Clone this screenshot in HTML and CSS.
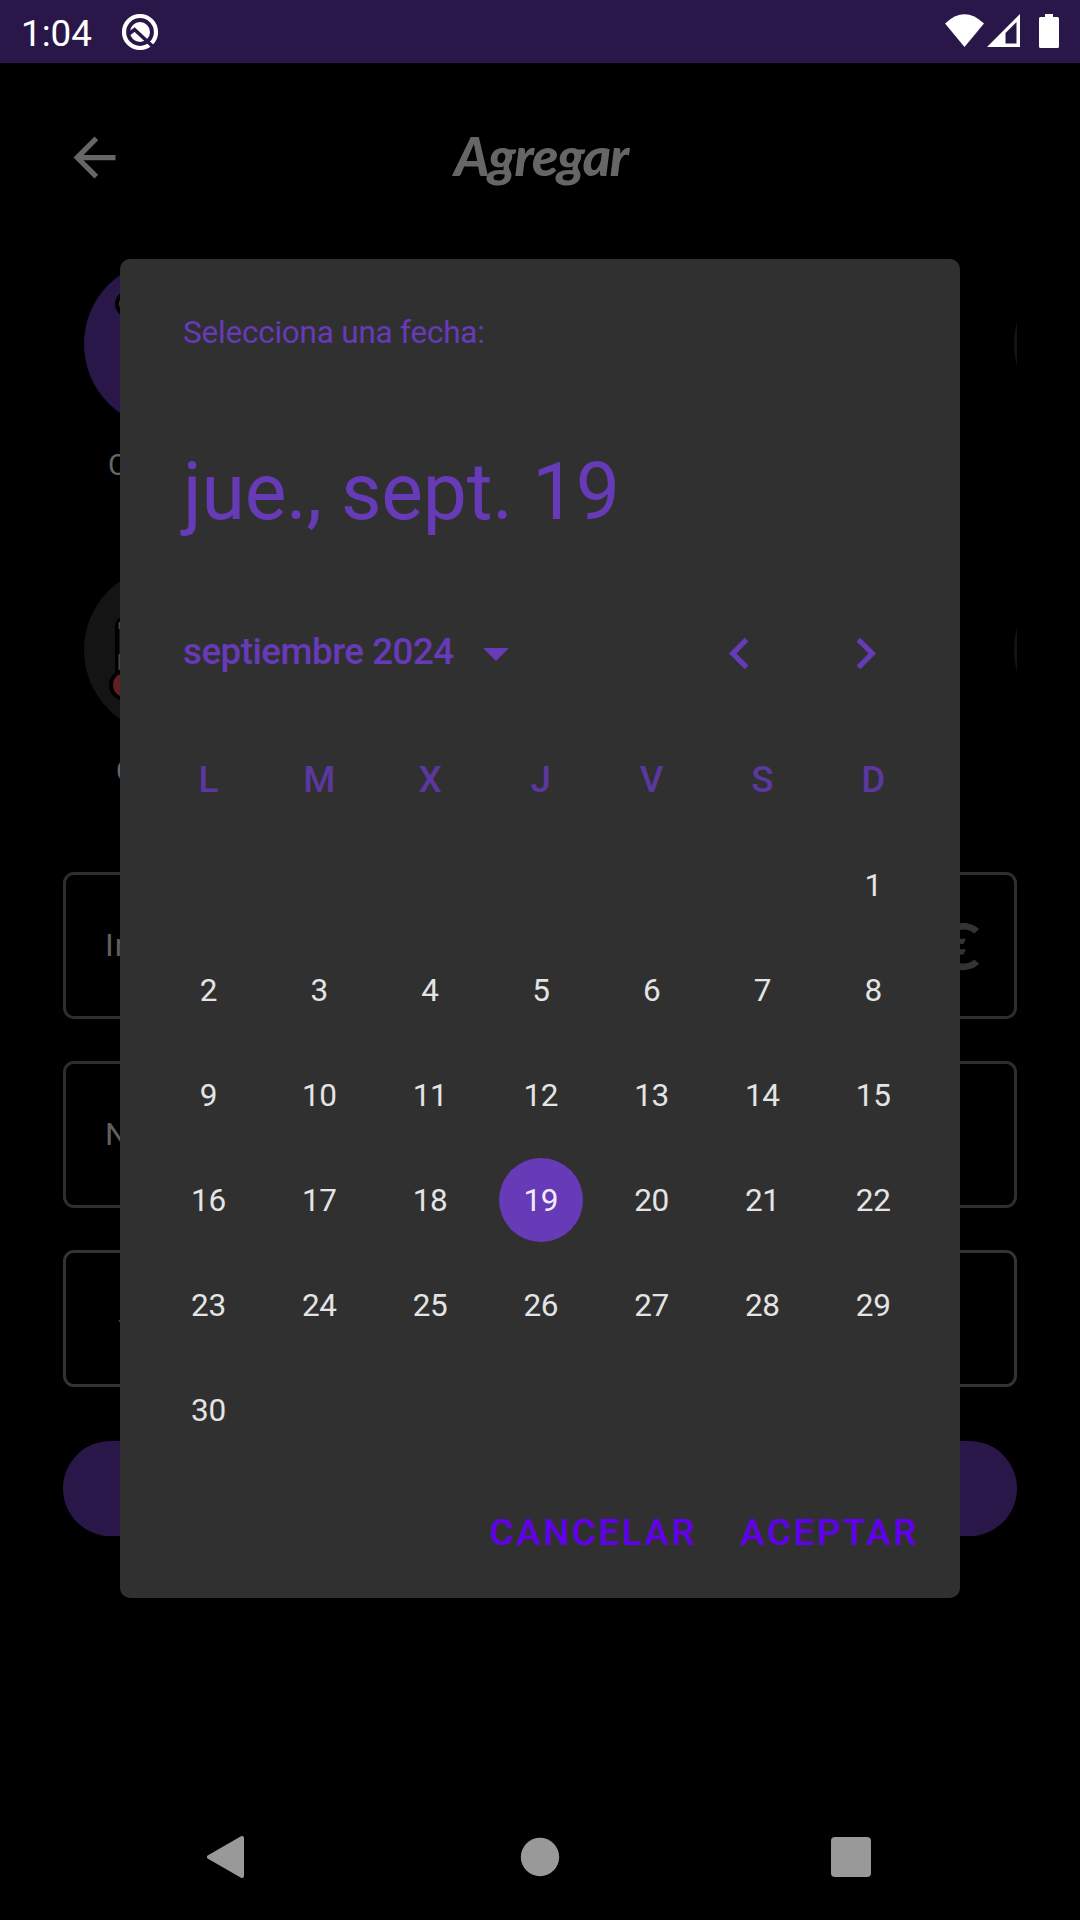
FILE: index.html
```html
<!DOCTYPE html>
<html lang="es">
<head>
<meta charset="utf-8">
<title>Agregar</title>
<link rel="stylesheet" href="styles.css">
</head>
<body>
<div class="screen">
  <header class="status">
    <span class="clock">1:04</span>
    <svg class="status-app" width="38" height="38" viewBox="0 0 38 38">
      <circle cx="19" cy="19" r="16" fill="none" stroke="#fff" stroke-width="4.2"/>
      <circle cx="19" cy="19" r="10" fill="#fff"/>
      <path d="M8.500 20.500 13.500 16.500 34 35.500" fill="none" stroke="#2a1749" stroke-width="3.6"/>
    </svg>
    <span class="spacer"></span>
    <svg width="115" height="36" viewBox="0 0 115 36" fill="#fff">
      <path d="M0 9.500Q19.500-9 39 9.500L19.500 33Z"/>
      <path fill-rule="evenodd" d="M42 33 75 0V33ZM60.500 19V29.500H71.500V8Z"/>
      <path d="M100 0h8v3h4.500q1.500 0 1.500 1.500v28q0 1.500-1.500 1.500h-17q-1.500 0-1.500-1.500v-28q0-1.500 1.500-1.500h4.500z"/>
    </svg>
  </header>

  <main class="app">
    <div class="toolbar">
      <svg class="back" width="63" height="63" viewBox="0 0 24 24" fill="#666"><path d="M20 11H7.830l5.590-5.590L12 4l-8 8 8 8 1.410-1.410L7.830 13H20v-2z"/></svg>
      <h1 class="title">Agregar</h1>
    </div>

    <section class="categories">
      <div class="category">
        <div class="bubble selected">
          <svg width="168" height="168" viewBox="0 0 168 168"><circle cx="44" cy="44" r="11" fill="#5c3030" stroke="#000" stroke-width="4"/></svg>
        </div>
        <span class="label">C</span>
      </div>
      <div class="category"><div class="bubble"></div></div>
      <div class="category">
        <div class="bubble">
          <svg width="168" height="168" viewBox="0 0 168 168">
            <rect x="33" y="52" width="28" height="62" rx="8" fill="#0d1a26" stroke="#000" stroke-width="4"/>
            <path d="M34.500 56h2v7h-2zM34.500 88h2v16h-2z" fill="#3c4a4e"/>
            <circle cx="41" cy="119" r="14" fill="#5e2023" stroke="#000" stroke-width="4"/>
          </svg>
        </div>
        <span class="label second">C</span>
      </div>
      <div class="category"><div class="bubble"></div></div>
    </section>

    <section class="form">
      <div class="field"><span class="hint">In</span>
        <svg class="euro" width="63" height="63" viewBox="0 0 24 24" fill="#333"><path d="M15 18.500c-2.510 0-4.680-1.420-5.760-3.500H15l1-2H8.580c-.05-.33-.08-.66-.08-1s.03-.67.08-1H15l1-2H9.240C10.320 6.920 12.500 5.500 15 5.500c1.610 0 3.090.59 4.230 1.570L21 5.300C19.410 3.870 17.300 3 15 3c-3.920 0-7.240 2.510-8.480 6H3l-1 2h4.060c-.04.33-.06.66-.06 1s.02.67.06 1H3l-1 2h4.520c1.240 3.490 4.560 6 8.480 6 2.310 0 4.410-.87 6-2.300l-1.780-1.770c-1.130.98-2.600 1.570-4.220 1.570z"/></svg>
      </div>
      <div class="field"><span class="hint">N</span></div>
      <div class="field date"><svg width="4" height="4" viewBox="0 0 4 4"><path d="M0 2 4 0V4Z" fill="#555"/></svg></div>
      <div class="submit"></div>
    </section>
  </main>

  <nav class="navbar">
    <svg width="38" height="44" viewBox="0 0 38 44"><path d="M2 22 35 3V41Z" fill="#999" stroke="#999" stroke-width="4" stroke-linejoin="round"/></svg>
    <svg width="40" height="40" viewBox="0 0 40 40"><circle cx="20" cy="20" r="19.200" fill="#999"/></svg>
    <svg width="40" height="40" viewBox="0 0 40 40"><rect width="40" height="40" rx="4" fill="#999"/></svg>
  </nav>

  <div class="dialog">
    <p class="prompt">Selecciona una fecha:</p>
    <p class="chosen">jue., sept. 19</p>
    <div class="month-row">
      <span class="month">septiembre 2024</span>
      <svg class="caret" width="26" height="13" viewBox="0 0 26 13"><path d="M0 0h26L13 13z"/></svg>
      <span class="spacer"></span>
      <svg width="63" height="63" viewBox="0 0 24 24"><path d="M15.410 7.410 14 6l-6 6 6 6 1.410-1.410L10.830 12z"/></svg>
      <svg width="63" height="63" viewBox="0 0 24 24"><path d="M10 6 8.590 7.410 13.170 12l-4.580 4.590L10 18l6-6z"/></svg>
    </div>
    <div class="weekdays"><span>L</span><span>M</span><span>X</span><span>J</span><span>V</span><span>S</span><span>D</span></div>
    <div class="days">
      <span class="first">1</span>
      <span>2</span><span>3</span><span>4</span><span>5</span><span>6</span><span>7</span><span>8</span>
      <span>9</span><span>10</span><span>11</span><span>12</span><span>13</span><span>14</span><span>15</span>
      <span>16</span><span>17</span><span>18</span><span class="today">19</span><span>20</span><span>21</span><span>22</span>
      <span>23</span><span>24</span><span>25</span><span>26</span><span>27</span><span>28</span><span>29</span>
      <span>30</span>
    </div>
    <div class="actions"><span>CANCELAR</span><span>ACEPTAR</span></div>
  </div>
</div>
</body>
</html>
```
FILE: styles.css
```css
* { box-sizing: border-box; margin: 0; padding: 0; }
body { background: #000; font-family: Roboto, "Noto Sans", sans-serif; }
svg { display: block; flex: none; }
.spacer { flex: 1; }
.screen { position: relative; width: 1080px; height: 1920px; overflow: hidden; background: #000; display: flex; flex-direction: column; }

.status { height: 63px; background: #2a1749; color: #fff; display: flex; align-items: flex-start; padding: 14px 20px 0 21px; }
.clock { width: 100px; font-size: 36.75px; line-height: 40px; }
.status-app { margin-top: -1px; }

.app { flex: 1; }
.toolbar { height: 189px; display: flex; align-items: center; padding-left: 63px; }
.title { width: 830px; padding-bottom: 4px; text-align: center; color: #666; font: italic 900 54px/60px Lato, cursive; letter-spacing: -1.3px; }

.categories { height: 612px; margin: 0 63px; overflow: hidden; padding: 8px 0 0 21px; display: grid; grid-template-columns: 168px 168px; column-gap: 762px; grid-auto-rows: 306px; }
.category { display: flex; flex-direction: column; }
.bubble { width: 168px; height: 168px; border-radius: 50%; background: #141414; flex: none; }
.bubble.selected { background: #2a1749; }
.label { padding: 19px 0 0 24px; font-size: 29px; line-height: 36px; color: #666; }
.label.second { padding: 19px 0 0 32px; }

.form { margin: 8px 63px 0; display: flex; flex-direction: column; }
.field { height: 147px; margin-bottom: 42px; border: 3px solid #2e2d31; border-radius: 11px; display: flex; align-items: center; justify-content: space-between; padding: 0 27px 0 39px; }
.hint { font-size: 32px; color: #5f5f5f; letter-spacing: 1px; padding-bottom: 2px; }
.euro { margin-top: 2px; }
.field.date { height: 137px; margin-bottom: 54px; border-color: #333; padding: 4px 0 0 52px; }
.submit { height: 95px; border-radius: 48px; background: #2a1749; }

.navbar { height: 126px; padding: 0 209px 0 207px; display: flex; align-items: center; }
.navbar svg:nth-child(2) { margin: 0 auto 0 275px; }

.dialog { position: absolute; left: 120px; top: 259px; width: 840px; height: 1339px; border-radius: 10px; background: #303030; color: #673ab7; fill: #673ab7; }
.prompt { padding: 55px 0 0 63px; font-size: 31.5px; line-height: 38px; letter-spacing: -0.22px; }
.chosen { padding: 94px 0 0 63px; font-size: 78.75px; line-height: 92px; letter-spacing: -0.3px; }
.month-row { margin-top: 52px; height: 126px; padding: 0 63px; display: flex; align-items: center; }
.month { width: 300px; font-size: 36.75px; font-weight: 500; letter-spacing: -0.5px; padding-bottom: 3px; }
.caret { margin-top: 2px; }
.month-row svg + svg { margin-left: 63px; }
.weekdays, .days { display: grid; grid-template-columns: repeat(7, 110.800px); margin-left: 33px; text-align: center; justify-items: center; align-items: center; }
.weekdays { height: 126px; margin-bottom: -9.5px; font-size: 36.75px; font-weight: 500; color: #5c37a0; }
.days { grid-auto-rows: 105px; font-size: 31.5px; letter-spacing: -0.4px; color: #e4e4e4; }
.days span { width: 84px; line-height: 85px; height: 84px; border-radius: 50%; }
.days .first { grid-column: 7; }
.days .today { background: #673ab7; color: #f0ebf8; }
.actions { display: flex; justify-content: flex-end; gap: 43px; padding: 48px 41px 0 0; font-size: 36.75px; line-height: 43px; font-weight: 500; letter-spacing: 2.600px; color: #6200ee; }
```
